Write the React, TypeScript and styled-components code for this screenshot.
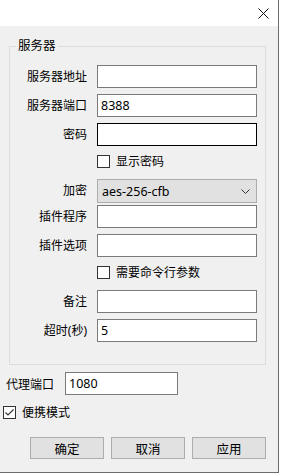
import styled, { createGlobalStyle } from "styled-components";

const GlobalStyle = createGlobalStyle`
  html, body {
    margin: 0;
    padding: 0;
    background: #ffffff;
  }
  body {
    font-family: "Noto Sans", "Noto Sans CJK SC", sans-serif;
    font-size: 12px;
    color: #000;
  }
`;

const Window = styled.div`
  width: 279px;
  height: 473px;
  box-sizing: border-box;
  border-right: 1px solid #6b6b6b;
  border-bottom: 1px solid #6b6b6b;
  background: #f0f0f0;
  display: flex;
  flex-direction: column;
`;

const TitleBar = styled.div`
  height: 26px;
  background: #ffffff;
  display: flex;
  justify-content: flex-end;
  align-items: center;
  padding-right: 9px;
`;

const Body = styled.div`
  display: flex;
  flex-direction: column;
  padding-top: 20px;
`;

const Group = styled.div`
  position: relative;
  margin-left: 9px;
  width: 257px;
  box-sizing: border-box;
  border: 1px solid #dcdcdc;
  padding: 18px 0 22px 0;
  display: flex;
  flex-direction: column;
`;

const Legend = styled.span`
  position: absolute;
  top: -9px;
  left: 6px;
  padding: 0 2px;
  background: #f0f0f0;
  line-height: 16px;
  font-size: 12.5px;
`;

const Row = styled.div<{ $mt: number }>`
  display: flex;
  align-items: center;
  margin-top: ${(p) => p.$mt}px;
`;

const Label = styled.span`
  width: 77px;
  text-align: right;
  line-height: 16px;
  margin-right: 10px;
  white-space: nowrap;
`;

const Field = styled.input<{ $w?: number; $focus?: boolean }>`
  width: ${(p) => p.$w ?? 160}px;
  height: 23px;
  box-sizing: border-box;
  border: 1px solid ${(p) => (p.$focus ? "#000000" : "#7a7a7a")};
  background: #ffffff;
  padding: 0 3px;
  font: inherit;
  font-size: 12.5px;
  color: #000;
  outline: none;
`;

const Combo = styled.div`
  width: 160px;
  height: 24px;
  box-sizing: border-box;
  border: 1px solid #adadad;
  background: #e1e1e1;
  display: flex;
  align-items: center;
  justify-content: space-between;
  padding: 0 6px 0 4px;
  font-size: 12.5px;
`;

const CheckRow = styled.label<{ $mt: number; $ml: number }>`
  display: flex;
  align-items: center;
  margin-top: ${(p) => p.$mt}px;
  margin-left: ${(p) => p.$ml}px;
  height: 13px;
  gap: 6px;
  line-height: 16px;
`;

const Box = styled.span`
  width: 13px;
  height: 13px;
  box-sizing: border-box;
  border: 1px solid #333333;
  background: #ffffff;
  display: flex;
  align-items: center;
  justify-content: center;
`;

const ProxyRow = styled.div`
  display: flex;
  align-items: center;
  margin-top: 7px;
  padding-left: 6px;
  gap: 11px;
`;

const Buttons = styled.div`
  display: flex;
  gap: 7px;
  margin-top: 18px;
  padding-left: 30px;
`;

const Button = styled.button`
  width: 74px;
  height: 22px;
  box-sizing: border-box;
  border: 1px solid #adadad;
  background: #e1e1e1;
  font: inherit;
  font-size: 12.5px;
  color: #000;
  padding: 0;
`;

function Check({ checked }: { checked?: boolean }) {
  return (
    <Box>
      {checked ? (
        <svg width="11" height="11" viewBox="0 0 11 11">
          <path d="M1.5 5.5 L4 8 L9.5 2.5" fill="none" stroke="#333" strokeWidth="1.1" />
        </svg>
      ) : null}
    </Box>
  );
}

function App() {
  return (
    <>
      <GlobalStyle />
      <Window>
        <TitleBar>
          <svg width="11" height="11" viewBox="0 0 11 11">
            <path d="M0.5 0.5 L10.5 10.5 M10.5 0.5 L0.5 10.5" stroke="#111" strokeWidth="1" />
          </svg>
        </TitleBar>
        <Body>
          <Group>
            <Legend>服务器</Legend>
            <Row $mt={0}>
              <Label>服务器地址</Label>
              <Field readOnly defaultValue="" />
            </Row>
            <Row $mt={6}>
              <Label>服务器端口</Label>
              <Field readOnly defaultValue="8388" />
            </Row>
            <Row $mt={6}>
              <Label>密码</Label>
              <Field readOnly type="password" defaultValue="" $focus />
            </Row>
            <CheckRow $mt={9} $ml={87}>
              <Check />
              显示密码
            </CheckRow>
            <Row $mt={11}>
              <Label>加密</Label>
              <Combo>
                <span>aes-256-cfb</span>
                <svg width="9" height="5" viewBox="0 0 9 5">
                  <path d="M0.5 0.5 L4.5 4.5 L8.5 0.5" fill="none" stroke="#333" strokeWidth="1" />
                </svg>
              </Combo>
            </Row>
            <Row $mt={2}>
              <Label>插件程序</Label>
              <Field readOnly defaultValue="" />
            </Row>
            <Row $mt={6}>
              <Label>插件选项</Label>
              <Field readOnly defaultValue="" />
            </Row>
            <CheckRow $mt={9} $ml={87}>
              <Check />
              需要命令行参数
            </CheckRow>
            <Row $mt={11}>
              <Label>备注</Label>
              <Field readOnly defaultValue="" />
            </Row>
            <Row $mt={6}>
              <Label>超时(秒)</Label>
              <Field readOnly defaultValue="5" />
            </Row>
          </Group>
          <ProxyRow>
            <span>代理端口</span>
            <Field readOnly defaultValue="1080" $w={113} />
          </ProxyRow>
          <CheckRow $mt={11} $ml={3}>
            <Check checked />
            便携模式
          </CheckRow>
          <Buttons>
            <Button>确定</Button>
            <Button>取消</Button>
            <Button>应用</Button>
          </Buttons>
        </Body>
      </Window>
    </>
  );
}

export default App;
